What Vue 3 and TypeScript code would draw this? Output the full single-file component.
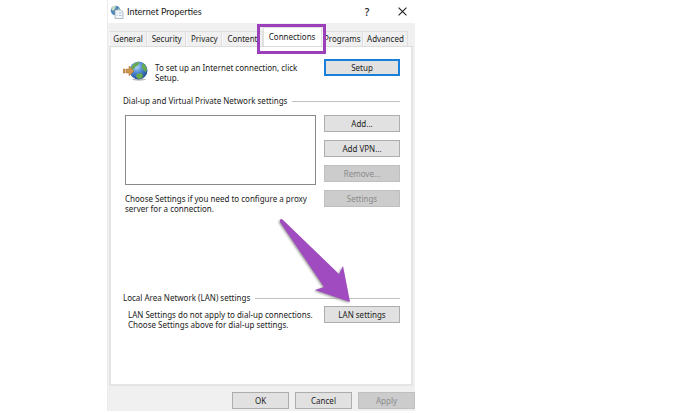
<script setup lang="ts">
import { ref } from 'vue'

const tabs = ['General', 'Security', 'Privacy', 'Content', 'Connections', 'Programs', 'Advanced']
const active = ref('Connections')
</script>

<template>
  <main class="dialog">
    <header class="titlebar">
      <svg class="app-icon" viewBox="0 0 14 14" aria-hidden="true">
        <circle cx="5.5" cy="5.5" r="4.8" fill="#4f87b8" />
        <path d="M1 4 3 1l3 0-1 3-2 2zM6 6l3-3 1 2-2 3z" fill="#c4dcc4" />
        <path d="M5 5h5.5l2.5 2v6.5H5z" fill="#f4f7fa" stroke="#8da0b2" stroke-width=".7" />
        <path d="M6.5 8h1m1.500 0h2.500M6.500 10.500h1m1.500 0h2.500" stroke="#a5c0d6" />
      </svg>
      <h1>Internet Properties</h1>
      <button class="help" type="button" aria-label="Help">?</button>
      <button class="close" type="button" aria-label="Close">
        <svg viewBox="0 0 8 8"><path d="M.5.5l7 7M7.500.5l-7 7" stroke="#222" fill="none" /></svg>
      </button>
    </header>

    <div class="body">
      <nav class="tabs" role="tablist">
        <div v-for="tab in tabs" :key="tab" class="slot">
          <button type="button" role="tab" class="tab" :class="{ active: tab === active }"
            :aria-selected="tab === active" @click="active = tab">{{ tab }}</button>
          <span v-if="tab === 'Connections'" class="highlight"></span>
        </div>
      </nav>

      <section class="panel">
        <div class="row setup">
          <svg class="globe" viewBox="0 0 25 20" aria-hidden="true">
            <defs>
              <radialGradient id="sea" cx=".4" cy=".3" r=".75">
                <stop offset="0" stop-color="#b4d6f7" />
                <stop offset=".45" stop-color="#4d88d2" />
                <stop offset="1" stop-color="#1d4790" />
              </radialGradient>
            </defs>
            <ellipse cx="16" cy="18.500" rx="7" ry="1.200" fill="#bbb" />
            <circle cx="15.500" cy="9.500" r="9" fill="url(#sea)" />
            <path d="M9 5l3-3 4-1 0 2-2 2-2 1-1 2-2 0-1-1zM20 2l2 2 2 4-1 3-3-2-1-3 0-2zM14 13l4-1 2 2-1 3-3 1-2-1-1-2z" fill="#69ab4c" />
            <path d="M0 8h2v4H0zM3 8h3V5l5 5-5 5v-3H3z" fill="#cf954d" stroke="#a87338" stroke-width=".5" />
          </svg>
          <p>To set up an Internet connection, click Setup.</p>
          <button type="button" class="btn default">Setup</button>
        </div>

        <h2 class="group">Dial-up and Virtual Private Network settings</h2>
        <div class="row dialup">
          <div class="left">
            <div class="list" role="listbox" aria-label="Connections"></div>
            <p>Choose Settings if you need to configure a proxy server for a connection.</p>
          </div>
          <div class="stack">
            <button type="button" class="btn">Add...</button>
            <button type="button" class="btn">Add VPN...</button>
            <button type="button" class="btn" disabled>Remove...</button>
            <button type="button" class="btn" disabled>Settings</button>
          </div>
        </div>

        <h2 class="group lan-title">Local Area Network (LAN) settings</h2>
        <div class="row lan">
          <p>LAN Settings do not apply to dial-up connections. Choose Settings above for dial-up settings.</p>
          <div class="target">
            <button type="button" class="btn">LAN settings</button>
            <svg class="arrow" viewBox="0 0 76 90" aria-hidden="true">
              <path d="M4 3Q5 1 7 3L63 57 67 49 74 85 39 73 48 70 4 5Z" fill="#a04bbf" />
            </svg>
          </div>
        </div>
      </section>
    </div>

    <footer class="footer">
      <button type="button" class="btn">OK</button>
      <button type="button" class="btn">Cancel</button>
      <button type="button" class="btn" disabled>Apply</button>
    </footer>
  </main>
</template>

<style>
body {
  background: #fff;
}
</style>

<style scoped>
* {
  box-sizing: border-box;
}
.dialog {
  width: 44%;
  margin-left: 107px;
  background: #f0f0f0;
  border-left: 1px solid #ececec;
  color: #222;
  font: 8px/10px "Noto Sans", sans-serif;
}
h1, h2, p {
  margin: 0;
  font: inherit;
}
button {
  padding: 0;
  border: 0;
  color: inherit;
  font: inherit;
  white-space: nowrap;
}
.titlebar {
  display: flex;
  align-items: center;
  height: 23px;
  padding: 0 8px 0 2px;
  background: #fff;
}
.app-icon {
  width: 14px;
  height: 14px;
  margin-right: 3px;
}
h1 {
  flex: 1;
  font: 9px/12px Lato, sans-serif;
}
.help {
  width: 14px;
  margin-right: 24px;
  background: none;
  font: 600 10px/14px "Open Sans", sans-serif;
}
.close {
  display: flex;
  background: none;
}
.close svg {
  width: 9px;
  height: 9px;
}
.body {
  padding: 4px 2px 0 1px;
}
.tabs {
  display: grid;
  grid-template-columns: 38fr 39fr 36fr 40fr 59fr 41fr 45fr;
  align-items: end;
  padding-right: 5px;
}
.slot {
  position: relative;
}
.tab {
  display: block;
  width: 100%;
  height: 15px;
  border: 1px solid #dfdfdf;
  border-bottom: 0;
  border-left-color: #f8f8f8;
  background: #f0f0f0;
}
.tab.active {
  height: 19px;
  border-color: #e0e0e0;
  background: #fff;
}
.highlight {
  position: absolute;
  z-index: 1;
  inset: -3px -4px -8px -6px;
  border: 3px solid #9b3fba;
  pointer-events: none;
}
.panel {
  padding: 12px 11px 54px 12px;
  border: 2px solid #e5e5e5;
  border-top: 1px solid #dcdcdc;
  background: #fff;
}
.row {
  display: flex;
  justify-content: space-between;
}
.btn {
  display: block;
  flex: none;
  width: 76px;
  height: 17px;
  border: 1px solid #adadad;
  background: #e1e1e1;
}
.btn.default {
  border: 2px solid #1a7fd8;
}
.btn:disabled {
  border-color: #bfbfbf;
  background: #cccccc;
  color: #8b8b8b;
}
.globe {
  flex: none;
  width: 25px;
  height: 20px;
  margin: 2px 7px 0 0;
}
.setup p {
  flex: 1;
  padding: 4px 12px 0 0;
}
.group {
  display: flex;
  align-items: center;
  gap: 5px;
  margin-top: 13px;
}
.group::after {
  content: "";
  flex: 1;
  height: 1px;
  background: #c0c0c0;
}
.dialup {
  gap: 8px;
  padding: 9px 0 0 2px;
}
.left {
  flex: 1;
}
.list {
  height: 70px;
  border: 1px solid #8a8a8a;
}
.left p {
  margin-top: 9px;
}
.stack {
  display: grid;
  gap: 8px;
  align-content: start;
}
.lan-title {
  margin-top: 79px;
}
.lan {
  gap: 8px;
  padding: 3px 0 0 5px;
}
.lan p {
  flex: 1;
  padding-top: 4px;
}
.target {
  position: relative;
}
.arrow {
  position: absolute;
  right: 48px;
  bottom: 23px;
  width: 76px;
  height: 90px;
  filter: drop-shadow(-1px 1px 1px #999);
  pointer-events: none;
}
.footer {
  display: flex;
  justify-content: flex-end;
  gap: 6px;
  padding: 6px 0 2px;
}
.footer .btn {
  width: 57px;
}
</style>
